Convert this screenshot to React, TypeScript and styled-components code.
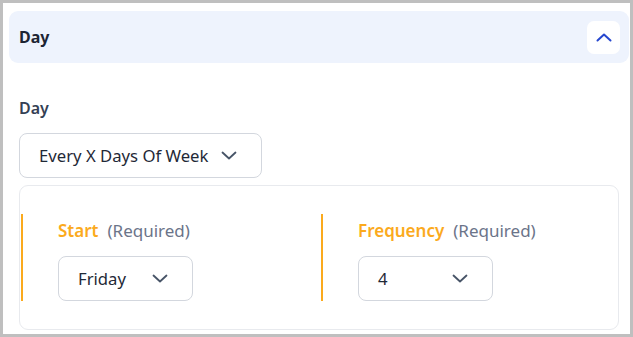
import React from "react";
import styled, { createGlobalStyle } from "styled-components";

const Global = createGlobalStyle`
  html, body { margin: 0; padding: 0; background: #bfbfbf; }
  body { font-family: "Noto Sans", "Open Sans", sans-serif; }
  * { box-sizing: border-box; }
`;

const Frame = styled.div`
  margin: 3px 3px 0 3px;
  height: 331px;
  background: #ffffff;
  padding: 8px 1px 0 6px;
  overflow: hidden;
`;

const Header = styled.div`
  height: 52px;
  background: #eef3fd;
  border-radius: 9px;
  display: flex;
  align-items: center;
  justify-content: space-between;
  padding: 0 9px 0 10px;
`;

const HeaderTitle = styled.span`
  font-size: 16px;
  font-weight: 700;
  color: #1d2433;
`;

const CollapseButton = styled.button`
  width: 33px;
  height: 33px;
  border: none;
  border-radius: 7px;
  background: #ffffff;
  display: flex;
  align-items: center;
  justify-content: center;
  padding: 0;
`;

const Body = styled.div`
  padding: 35px 10px 0 10px;
  display: flex;
  flex-direction: column;
  align-items: flex-start;
`;

const FieldLabel = styled.div`
  font-size: 16px;
  line-height: 20px;
  font-weight: 600;
  color: #344054;
  margin-bottom: 15px;
`;

const Select = styled.div<{ $minWidth?: number }>`
  height: 45px;
  min-width: ${(p) => p.$minWidth ?? 0}px;
  border: 1px solid #d3d7de;
  border-radius: 8px;
  display: flex;
  align-items: center;
  gap: 13px;
  padding: 0 24px 0 19px;
  font-size: 16.7px;
  color: #1f2937;
  background: #fff;
`;

const SelectText = styled.span`
  flex: 1;
`;

const Card = styled.div`
  align-self: stretch;
  margin-top: 7px;
  border: 1px solid #e8eaee;
  border-radius: 9px;
  padding: 28px 0 28px 1px;
  display: grid;
  grid-template-columns: 300px 1fr;
`;

const Column = styled.div`
  border-left: 2px solid #fbaa1d;
  padding: 7px 0 0 35px;
  display: flex;
  flex-direction: column;
  align-items: flex-start;
  gap: 15px;
`;

const RowLabel = styled.div`
  font-size: 17px;
  line-height: 20px;
  display: flex;
  gap: 9px;
`;

const Accent = styled.span`
  color: #fbaa1d;
  font-weight: 600;
`;

const Hint = styled.span`
  color: #6b7489;
`;

const ChevronDown = () => (
  <svg width="16" height="9" viewBox="0 0 16 9" fill="none">
    <path d="M1.5 1.5 L8 7.5 L14.5 1.5" stroke="#475467" strokeWidth="1.8" strokeLinecap="round" strokeLinejoin="round" />
  </svg>
);

const ChevronUp = () => (
  <svg width="16" height="9" viewBox="0 0 16 9" fill="none">
    <path d="M1.5 7.5 L8 1.5 L14.5 7.5" stroke="#2647cf" strokeWidth="2" strokeLinecap="round" strokeLinejoin="round" />
  </svg>
);

export default function App() {
  return (
    <>
      <Global />
      <Frame>
        <Header>
          <HeaderTitle>Day</HeaderTitle>
          <CollapseButton aria-label="Collapse">
            <ChevronUp />
          </CollapseButton>
        </Header>
        <Body>
          <FieldLabel>Day</FieldLabel>
          <Select>
            <SelectText>Every X Days Of Week</SelectText>
            <ChevronDown />
          </Select>
          <Card>
            <Column>
              <RowLabel>
                <Accent>Start</Accent>
                <Hint>(Required)</Hint>
              </RowLabel>
              <Select $minWidth={135}>
                <SelectText>Friday</SelectText>
                <ChevronDown />
              </Select>
            </Column>
            <Column>
              <RowLabel>
                <Accent>Frequency</Accent>
                <Hint>(Required)</Hint>
              </RowLabel>
              <Select $minWidth={135}>
                <SelectText>4</SelectText>
                <ChevronDown />
              </Select>
            </Column>
          </Card>
        </Body>
      </Frame>
    </>
  );
}
